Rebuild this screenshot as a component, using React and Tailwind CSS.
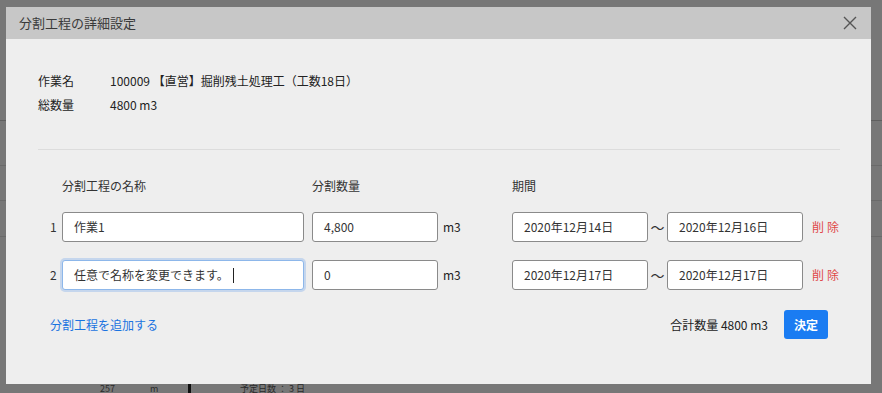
import React from 'react';

const font = { fontFamily: '"Noto Sans CJK JP", "Noto Sans", sans-serif' };

const rows = [
  { no: 1, name: '作業1', qty: '4,800', from: '2020年12月14日', to: '2020年12月16日', focused: false },
  { no: 2, name: '任意で名称を変更できます。', qty: '0', from: '2020年12月17日', to: '2020年12月17日', focused: true },
];

const Field = ({ value, className, focused }) => (
  <div
    className={
      'shrink-0 h-[30px] flex items-center px-[11px] bg-white rounded-[3px] text-[12px] text-[#333] ' +
      (focused
        ? 'border border-[#8db7ea] shadow-[0_0_0_2px_rgba(120,170,235,0.35)] '
        : 'border border-[#8a8a8a] ') +
      className
    }
  >
    <span>{value}</span>
    {focused && <span className="ml-[4px] w-px h-[15px] bg-[#222]"></span>}
  </div>
);

const App = () => {
  return (
    <div className="relative w-[882px] h-[393px] overflow-hidden bg-[#777777]" style={font}>
      {/* dimmed page behind */}
      <div className="absolute left-0 top-[120px] w-full h-px bg-[#5f5f5f]"></div>
      <div className="absolute left-0 top-[165px] w-full h-px bg-[#6a6a6a]"></div>
      <div className="absolute left-0 top-[200px] w-full h-px bg-[#6a6a6a]"></div>
      <div className="absolute left-0 top-[236px] w-full h-px bg-[#6a6a6a]"></div>
      <div className="absolute left-0 top-[384px] w-full h-[9px] flex items-center text-[9px] leading-[9px] text-[#2a2a2a]">
        <span className="ml-[100px] w-[50px]">257</span>
        <span className="w-[38px]">m</span>
        <span className="w-[3px] h-[9px] bg-[#111]"></span>
        <span className="ml-[49px]">予定日数 ： 3 日</span>
      </div>

      <div className="absolute left-[6px] top-[7px] w-[865px] h-[377px] flex flex-col bg-[#eeeeee]">
        <div className="h-[32px] shrink-0 bg-[#c7c7c7] flex items-center justify-between pl-[13px] pr-[14px]">
          <span className="text-[13px] text-[#3a3a3a]">分割工程の詳細設定</span>
          <svg width="14" height="14" viewBox="0 0 14 14" className="text-[#555]">
            <path d="M1 1L13 13M13 1L1 13" stroke="currentColor" strokeWidth="1.4" />
          </svg>
        </div>

        <div className="flex flex-col px-[32px]">
          <div className="mt-[33px] flex flex-col gap-[6px] text-[12px] text-[#222]">
            <div className="flex items-center h-[18px]">
              <span className="w-[72px]">作業名</span>
              <span>100009 【直営】掘削残土処理工（工数18日）</span>
            </div>
            <div className="flex items-center h-[18px]">
              <span className="w-[72px]">総数量</span>
              <span>4800 m3</span>
            </div>
          </div>

          <div className="mt-[35px] h-px bg-[#dcdcdc] w-[802px]"></div>

          <div className="mt-[27px] flex text-[12px] text-[#333] h-[18px] items-center">
            <span className="ml-[24px] w-[250px]">分割工程の名称</span>
            <span className="w-[200px]">分割数量</span>
            <span>期間</span>
          </div>

          <div className="mt-[17px] flex flex-col gap-[18px]">
            {rows.map(r => (
              <div key={r.no} className="flex items-center h-[30px] whitespace-nowrap">
                <span className="shrink-0 w-[24px] pl-[12px] text-[12px] text-[#333]">{r.no}</span>
                <Field value={r.name} focused={r.focused} className="w-[242px]" />
                <Field value={r.qty} className="ml-[8px] w-[126px]" />
                <span className="shrink-0 ml-[5px] w-[69px] text-[12px] text-[#222]">m3</span>
                <Field value={r.from} className="w-[136px]" />
                <span className="shrink-0 w-[19px] text-center text-[14px] text-[#333]">〜</span>
                <Field value={r.to} className="w-[136px]" />
                <span className="shrink-0 ml-[9px] text-[12px] text-[#e04848] tracking-[3px]">削除</span>
              </div>
            ))}
          </div>

          <div className="mt-[20px] flex items-center justify-between pl-[12px] w-[790px]">
            <span className="text-[12px] text-[#1a73e0]">分割工程を追加する</span>
            <div className="flex items-center">
              <span className="text-[12px] text-[#222]">合計数量 4800 m3</span>
              <button className="ml-[16px] w-[44px] h-[29px] rounded-[3px] bg-[#1a7cf2] text-white text-[12px] font-bold">決定</button>
            </div>
          </div>
        </div>
      </div>
    </div>
  );
};

export default App;
